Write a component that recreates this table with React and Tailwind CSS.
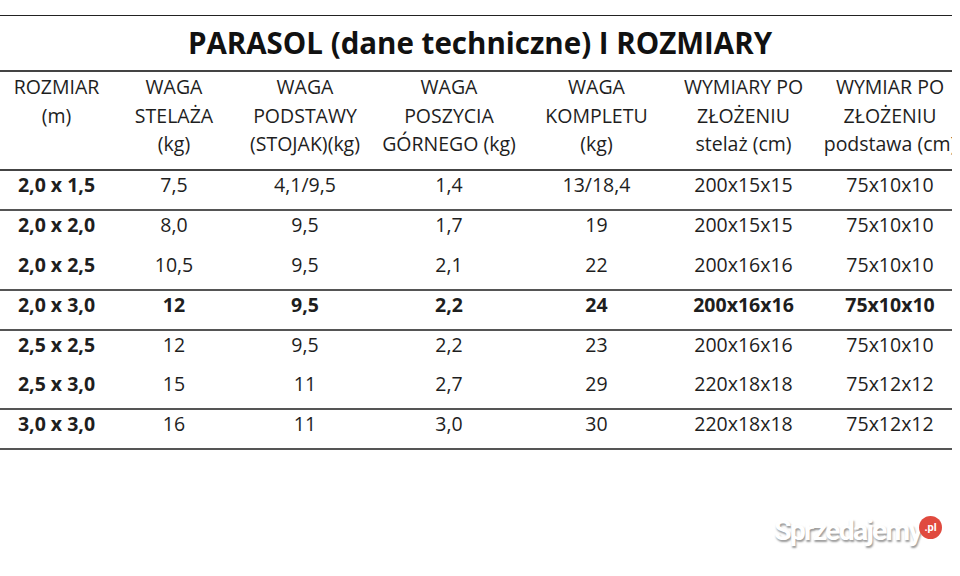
import React from 'react';

const cols = ['w-[113px]', 'w-[122px]', 'w-[140px]', 'w-[148px]', 'w-[147px]', 'w-[147px]', 'w-[146px]'];

const headers = [
  ['ROZMIAR', '(m)', ''],
  ['WAGA', 'STELAŻA', '(kg)'],
  ['WAGA', 'PODSTAWY', '(STOJAK)(kg)'],
  ['WAGA', 'POSZYCIA', 'GÓRNEGO (kg)'],
  ['WAGA', 'KOMPLETU', '(kg)'],
  ['WYMIARY PO', 'ZŁOŻENIU', 'stelaż (cm)'],
  ['WYMIAR PO', 'ZŁOŻENIU', 'podstawa (cm)'],
];

const rows = [
  { cells: ['2,0 x 1,5', '7,5', '4,1/9,5', '1,4', '13/18,4', '200x15x15', '75x10x10'], line: true },
  { cells: ['2,0 x 2,0', '8,0', '9,5', '1,7', '19', '200x15x15', '75x10x10'] },
  { cells: ['2,0 x 2,5', '10,5', '9,5', '2,1', '22', '200x16x16', '75x10x10'], line: true },
  { cells: ['2,0 x 3,0', '12', '9,5', '2,2', '24', '200x16x16', '75x10x10'], line: true, bold: true },
  { cells: ['2,5 x 2,5', '12', '9,5', '2,2', '23', '200x16x16', '75x10x10'] },
  { cells: ['2,5 x 3,0', '15', '11', '2,7', '29', '220x18x18', '75x12x12'], line: true },
  { cells: ['3,0 x 3,0', '16', '11', '3,0', '30', '220x18x18', '75x12x12'], line: true },
];

export default function App() {
  return (
    <div className="relative w-[960px] h-[576px] bg-white text-[#1e1e1e] overflow-hidden" style={{ fontFamily: '"Open Sans", "Noto Sans", sans-serif' }}>
      <div className="h-[15px]" />
      <div className="w-[952px] overflow-hidden">
        <div className="border-t border-[#222] h-[57px] border-b-2 border-b-[#444] flex items-center justify-center w-[952px]">
          <h1 className="text-[29.5px] font-bold leading-none text-[#111] pl-[8px]">PARASOL (dane techniczne) I ROZMIARY</h1>
        </div>

        <div className="flex w-[963px] border-b-2 border-[#444] h-[99px] pt-[1px]">
          {headers.map((h, i) => (
            <div key={i} className={`${cols[i]} shrink-0 text-center text-[19.5px] leading-[28.5px] whitespace-nowrap`}>
              {h.map((t, j) => (
                <div key={j} className="h-[28.5px]">{t}</div>
              ))}
            </div>
          ))}
        </div>

        {rows.map((r, ri) => (
          <div key={ri} className={`flex w-[963px] h-[39.9px] ${r.line ? 'border-b-2 border-[#555]' : ''}`}>
            {r.cells.map((c, ci) => (
              <div
                key={ci}
                className={`${cols[ci]} shrink-0 text-center text-[19.5px] leading-[27px] whitespace-nowrap ${ci === 0 || r.bold ? 'font-bold' : ''}`}
              >
                {c}
              </div>
            ))}
          </div>
        ))}
      </div>

      <div className="absolute left-[774px] top-[517px] flex items-start">
        <span
          className="text-[28.5px] font-bold text-white tracking-[-1.8px] leading-none"
          style={{ fontFamily: 'Roboto, sans-serif', textShadow: '1px 2px 2px rgba(0,0,0,0.4)' }}
        >
          Sprzedajemy
        </span>
        <span className="-ml-[2px] -mt-[1px] w-[23px] h-[23px] rounded-full bg-[#e04a3f] text-white text-[11px] font-bold flex items-center justify-center leading-none" style={{ fontFamily: 'Roboto, sans-serif' }}>
          .pl
        </span>
      </div>
    </div>
  );
}
